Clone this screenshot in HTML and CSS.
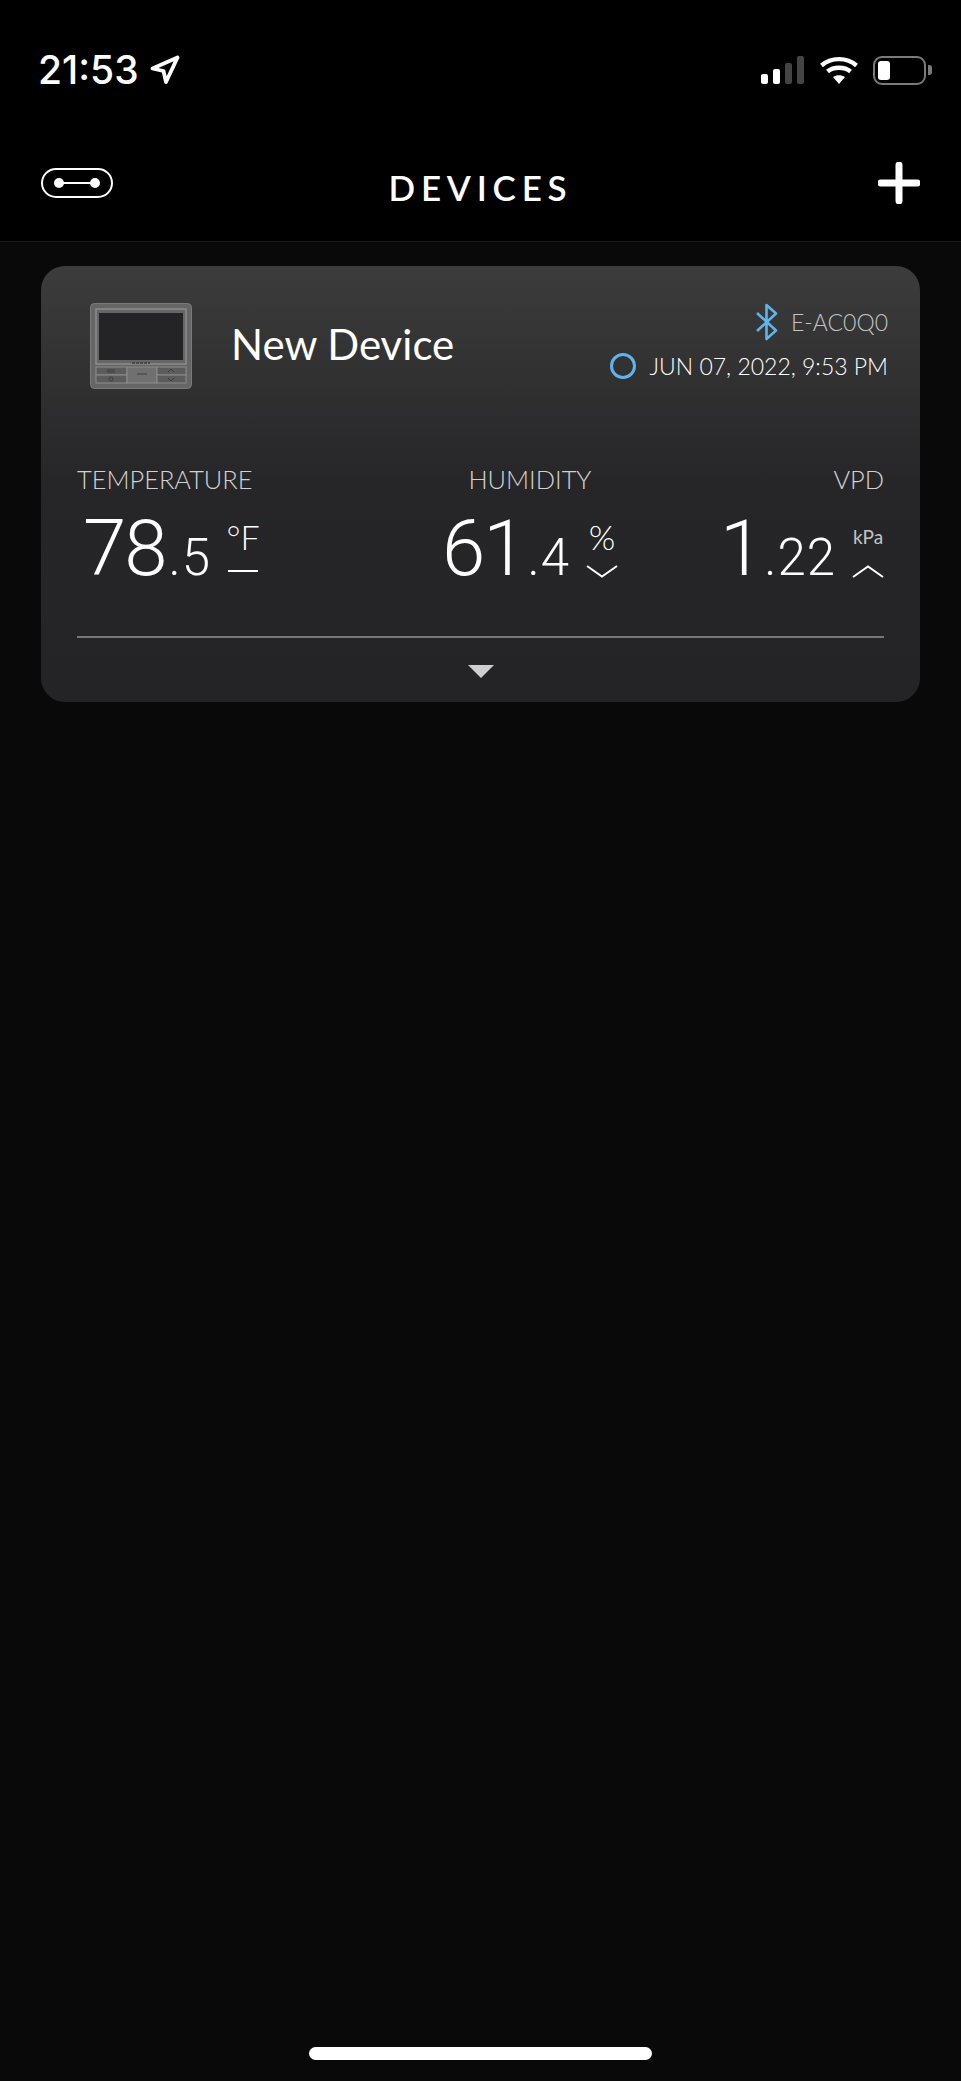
FILE: index.html
```html
<!DOCTYPE html>
<html lang="en">
<head>
    <meta charset="UTF-8">
    <meta name="viewport" content="width=device-width, initial-scale=1.0">
    <title>Devices</title>
    <link rel="stylesheet" href="styles.css">
</head>
<body>
    <header class="top">
        <!-- Status bar -->
        <div class="status-bar">
            <div class="status-left">
                <span class="clock">21:53</span>
                <svg class="arrow" width="30" height="30" viewBox="0 0 30 30"><path d="M2.5 13.5 L27.5 2.5 L16 27 L13.5 16 Z" fill="none" stroke="#fff" stroke-width="3.8" stroke-linejoin="round"/></svg>
            </div>
            <div class="status-right">
                <div class="signal">
                    <span class="bar bar-1"></span>
                    <span class="bar bar-2"></span>
                    <span class="bar bar-3"></span>
                    <span class="bar bar-4"></span>
                </div>
                <svg class="wifi" width="40" height="30" viewBox="0 0 40 30"><g fill="none" stroke="#fff" stroke-width="4.4"><path d="M2.5 10.5 C12 2 28 2 37.5 10.5"/><path d="M8.5 16.5 C14.5 11.5 25.5 11.5 31.5 16.5"/></g><path d="M14 22 C17.5 19.5 22.5 19.5 26 22 L20 29 Z" fill="#fff"/></svg>
                <div class="battery">
                    <div class="battery-body"><span class="battery-level"></span></div>
                    <span class="battery-nub"></span>
                </div>
            </div>
        </div>

        <!-- Nav -->
        <nav class="nav">
            <svg class="link-icon" width="72" height="30" viewBox="0 0 72 30"><rect x="1" y="1" width="70" height="28" rx="14" fill="none" stroke="#fff" stroke-width="2"/><circle cx="18" cy="15" r="5" fill="#fff"/><circle cx="54" cy="15" r="5" fill="#fff"/><path d="M18 15 H54" stroke="#fff" stroke-width="2"/></svg>
            <h1 class="nav-title">DEVICES</h1>
            <svg class="plus-icon" width="42" height="42" viewBox="0 0 42 42"><path d="M21 3 V39 M3 21 H39" stroke="#fff" stroke-width="7" stroke-linecap="round"/></svg>
        </nav>
    </header>

    <main class="content">
        <section class="card">
            <div class="card-head">
                <svg class="device-pic" width="102" height="86" viewBox="0 0 102 86">
                    <rect x="0.5" y="0.5" width="101" height="85" rx="4" fill="#666" stroke="#7a7a7a"/>
                    <rect x="6" y="6" width="90" height="55" fill="none" stroke="#8c8c8c" stroke-width="1.5"/>
                    <rect x="9" y="10" width="84" height="47" fill="#242426"/>
                    <path d="M42 60 H60" stroke="#3c3c3c" stroke-width="1.5" stroke-dasharray="3 1"/>
                    <rect x="6" y="64" width="31" height="8" fill="#5c5c5c" stroke="#8c8c8c"/>
                    <rect x="6" y="72" width="31" height="8" fill="#5c5c5c" stroke="#8c8c8c"/>
                    <rect x="37" y="64" width="30" height="16" fill="#707070" stroke="#8c8c8c"/>
                    <rect x="67" y="64" width="29" height="8" fill="#5c5c5c" stroke="#8c8c8c"/>
                    <rect x="67" y="72" width="29" height="8" fill="#5c5c5c" stroke="#8c8c8c"/>
                    <path d="M17 67 H25 M17 69 H25 M47 71 H57 M78 69 L81 66 L84 69 M78 75 L81 78 L84 75" fill="none" stroke="#3c3c3c"/>
                    <circle cx="21" cy="76" r="2" fill="none" stroke="#3c3c3c"/>
                </svg>
                <h2 class="device-name">New Device</h2>
                <div class="device-meta">
                    <div class="meta-line meta-id">
                        <svg class="bt-icon" width="24" height="38" viewBox="0 0 24 38"><path d="M2 10 L21 27.5 L11.5 36 V2 L21 10.5 L2 28" fill="none" stroke="#5fb4ea" stroke-width="2.6" stroke-linejoin="round"/></svg>
                        <span>E-AC0Q0</span>
                    </div>
                    <div class="meta-line meta-date">
                        <span class="status-ring"></span>
                        <span>JUN 07, 2022, 9:53 PM</span>
                    </div>
                </div>
            </div>

            <div class="stats">
                <div class="stat stat-temp">
                    <div class="stat-label">TEMPERATURE</div>
                    <div class="stat-value">
                        <span class="num-big">78</span><span class="num-small">.5</span>
                        <div class="unit">
                            <span class="unit-text unit-temp">°F</span>
                            <span class="trend-flat"></span>
                        </div>
                    </div>
                </div>
                <div class="stat stat-hum">
                    <div class="stat-label">HUMIDITY</div>
                    <div class="stat-value">
                        <span class="num-big">61</span><span class="num-small">.4</span>
                        <div class="unit">
                            <span class="unit-text">%</span>
                            <svg width="32" height="13" viewBox="0 0 32 13"><path d="M1 1 L16 11.5 L31 1" fill="none" stroke="#fff" stroke-width="2"/></svg>
                        </div>
                    </div>
                </div>
                <div class="stat stat-vpd">
                    <div class="stat-label">VPD</div>
                    <div class="stat-value">
                        <span class="num-big">1</span><span class="num-small">.22</span>
                        <div class="unit">
                            <span class="unit-text unit-kpa">kPa</span>
                            <svg width="32" height="13" viewBox="0 0 32 13"><path d="M1 12 L16 1.5 L31 12" fill="none" stroke="#fff" stroke-width="2"/></svg>
                        </div>
                    </div>
                </div>
            </div>

            <div class="card-foot">
                <span class="caret"></span>
            </div>
        </section>
    </main>

    <div class="home-bar"></div>
</body>
</html>
```

FILE: styles.css
```css
/* General Layout and Reset */
* {
    margin: 0;
    padding: 0;
    box-sizing: border-box;
}
html, body {
    height: 2081px;
    overflow: hidden;
}
body {
    display: flex;
    flex-direction: column;
    font-family: 'Lato', 'Liberation Sans', sans-serif;
    background-color: #090909;
    color: #fff;
}

/* Status bar + nav */
.top {
    background-color: #000;
    border-bottom: 1px solid #1c1c1c;
    height: 242px;
    padding-top: 42px;
}
.status-bar {
    display: flex;
    justify-content: space-between;
    align-items: center;
    height: 56px;
    padding: 0 29px 0 38px;
}
.status-left, .status-right {
    display: flex;
    align-items: center;
}
.clock {
    font-family: 'Inter', sans-serif;
    font-size: 39px;
    font-weight: 500;
    line-height: 56px;
}
.arrow {
    margin-left: 11px;
}
.signal {
    display: flex;
    align-items: flex-end;
    gap: 5px;
    height: 28px;
}
.bar {
    width: 7px;
    border-radius: 2px;
    background-color: #fff;
}
.bar-1 { height: 10px; }
.bar-2 { height: 15px; }
.bar-3 { height: 21px; background-color: #444; }
.bar-4 { height: 28px; background-color: #444; }
.wifi {
    margin-left: 15px;
}
.battery {
    display: flex;
    align-items: center;
    margin-left: 14px;
}
.battery-body {
    width: 53px;
    height: 29px;
    border: 2px solid #7a7a7a;
    border-radius: 9px;
    padding: 3px;
}
.battery-level {
    display: block;
    width: 12px;
    height: 100%;
    background-color: #fff;
    border-radius: 3px;
}
.battery-nub {
    width: 4px;
    height: 10px;
    margin-left: 2px;
    background-color: #7a7a7a;
    border-radius: 0 3px 3px 0;
}

.nav {
    display: grid;
    grid-template-columns: 1fr auto 1fr;
    align-items: center;
    height: 42px;
    margin-top: 64px;
    padding: 0 41px;
}
.nav-title {
    height: 42px;
    font-size: 35px;
    font-weight: 600;
    letter-spacing: 5.8px;
    line-height: 50px;
}
.plus-icon {
    justify-self: end;
}

/* Device card */
.content {
    flex: 1;
    padding: 24px 41px 0;
}
.card {
    height: 436px;
    border-radius: 24px;
    background: linear-gradient(to bottom, #3c3c3c 0%, #262628 50%, #242426 100%);
    padding: 0 36px;
}
.card-head {
    display: flex;
    align-items: center;
    padding: 37px 0 0 13px;
}
.device-name {
    font-size: 42px;
    font-weight: 400;
    margin: -4px 0 0 39px;
}
.device-meta {
    margin-left: auto;
    margin-right: -4px;
    display: flex;
    flex-direction: column;
    align-items: flex-end;
    gap: 8px;
    margin-top: -4px;
}
.meta-line {
    display: flex;
    align-items: center;
    height: 36px;
    font-size: 23px;
    font-weight: 300;
}
.meta-id {
    color: #c4c4c4;
    gap: 12px;
}
.meta-date {
    gap: 14px;
}
.status-ring {
    width: 26px;
    height: 26px;
    border: 3px solid #5fb4ea;
    border-radius: 50%;
}

.stats {
    display: flex;
    margin-top: 74px;
}
.stat {
    display: flex;
    flex-direction: column;
}
.stat-temp {
    flex: 1;
}
.stat-temp .stat-value {
    padding-left: 6px;
}
.stat-hum {
    align-items: center;
    margin-right: 102px;
}
.stat-vpd {
    align-items: flex-end;
}
.stat-label {
    font-size: 25.4px;
    font-weight: 300;
    color: #d2d2d2;
    line-height: 32px;
}
.stat-value {
    display: flex;
    align-items: baseline;
    margin-top: 12px;
    font-family: 'Roboto', sans-serif;
    font-weight: 300;
    line-height: 84px;
}
.num-big {
    font-size: 78px;
    letter-spacing: -2px;
}
.num-small {
    font-size: 51px;
    letter-spacing: 1px;
    margin-left: 3px;
}
.unit {
    display: flex;
    flex-direction: column;
    align-items: center;
    margin: 0 0 22px 16px;
    width: 32px;
    align-self: flex-end;
    height: 61px;
    justify-content: space-between;
}
.unit-text {
    font-family: 'Lato', sans-serif;
    font-size: 34px;
    line-height: 40px;
}
.unit-temp {
    font-weight: 300;
}
.unit-kpa {
    font-size: 19px;
    font-weight: 400;
    color: #c4c4c4;
}
.trend-flat {
    display: block;
    width: 30px;
    height: 2px;
    margin-bottom: 6px;
    background-color: #fff;
}

.card-foot {
    margin-top: 36px;
    border-top: 2px solid #777;
    display: flex;
    justify-content: center;
    padding-top: 27px;
}
.caret {
    width: 0;
    height: 0;
    border-left: 13px solid transparent;
    border-right: 13px solid transparent;
    border-top: 13px solid #cfcfcf;
}

.home-bar {
    width: 343px;
    height: 13px;
    margin: 0 auto 21px;
    border-radius: 7px;
    background-color: #fff;
}
```
